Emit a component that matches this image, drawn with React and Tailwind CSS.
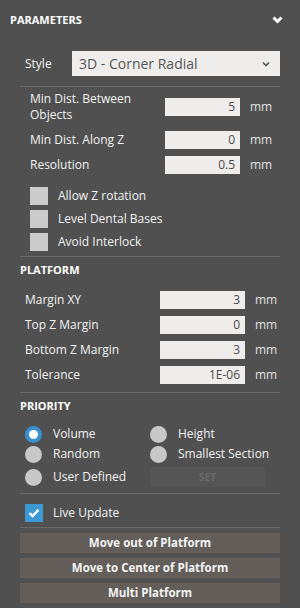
import React from 'react';

const Divider = ({ className = '' }) => (
  <div className={`mx-[20px] h-px bg-[#696969] ${className}`} />
);

function NumField({ label, value, labelPad = 'pl-[30px]', inputW = 'w-[75px]', h = 'h-[24px]', leading = '' }) {
  return (
    <div className={`flex items-center ${h} ${labelPad}`}>
      <div className={`w-[135px] text-[12px] text-[#f2f2f2] ${leading}`}>{label}</div>
      <div className={`${inputW} h-[18px] bg-[#eeedeb] text-right pr-[5px] text-[12px] leading-[18px] text-[#4a4a4a]`}>
        {value}
      </div>
      <div className="ml-[10px] text-[12px] text-[#e0e0e0]">mm</div>
    </div>
  );
}

function Check({ label, checked = false }) {
  return (
    <div className="flex items-center h-[18px] gap-[10px]">
      {checked ? (
        <div className="w-[18px] h-[18px] bg-[#3d99d4] flex items-center justify-center">
          <svg width="12" height="10" viewBox="0 0 12 10">
            <path d="M1.5 5.2 L4.6 8 L10.5 1.8" fill="none" stroke="#fff" strokeWidth="2.4" />
          </svg>
        </div>
      ) : (
        <div className="w-[18px] h-[18px] bg-[#cbcbcb]" />
      )}
      <span className="text-[12px] text-[#f2f2f2]">{label}</span>
    </div>
  );
}

function Radio({ label, selected = false }) {
  return (
    <div className="flex items-center gap-[11px] whitespace-nowrap">
      {selected ? (
        <div className="w-[17px] h-[17px] rounded-full bg-[#3a8fcf] flex items-center justify-center">
          <div className="w-[9px] h-[9px] rounded-full bg-white" />
        </div>
      ) : (
        <div className="w-[17px] h-[17px] rounded-full bg-[#c8c8c8]" />
      )}
      <span className="text-[12px] text-[#f2f2f2]">{label}</span>
    </div>
  );
}

export default function App() {
  return (
    <div className="w-[300px] h-[608px] bg-[#505050] font-['Open_Sans',sans-serif] overflow-hidden">
      {/* Header */}
      <div className="h-[40px] flex items-center justify-between pl-[10px] pr-[17px]">
        <span className="text-[11px] font-bold text-white">PARAMETERS</span>
        <svg width="11" height="8" viewBox="0 0 11 8">
          <path d="M1.5 1.5 L5.5 5.5 L9.5 1.5" fill="none" stroke="#fff" strokeWidth="3" />
        </svg>
      </div>

      {/* Style */}
      <div className="mt-[11px] flex items-center pl-[25px] pr-[20px]">
        <span className="w-[47px] text-[12px] text-[#f2f2f2]">Style</span>
        <div className="flex-1 h-[25px] bg-[#eeedeb] flex items-center justify-between pl-[7px] pr-[10px]">
          <span className="text-[14px] text-[#555555]">3D - Corner Radial</span>
          <svg width="8" height="6" viewBox="0 0 8 6">
            <path d="M1 1.5 L4 4.5 L7 1.5" fill="none" stroke="#555" strokeWidth="1.6" />
          </svg>
        </div>
      </div>

      <Divider className="mt-[10px]" />

      <div className="mt-[5px]">
        <NumField
          label={<>Min Dist. Between<br />Objects</>}
          value="5"
          h="h-[30px]"
          leading="leading-[16px]"
        />
        <div className="mt-[6px] flex flex-col gap-px">
          <NumField label="Min Dist. Along Z" value="0" />
          <NumField label="Resolution" value="0.5" />
        </div>
      </div>

      <div className="mt-[10px] pl-[30px] flex flex-col gap-[5px]">
        <Check label="Allow Z rotation" />
        <Check label="Level Dental Bases" />
        <Check label="Avoid Interlock" />
      </div>

      <Divider className="mt-[5px]" />

      {/* Platform */}
      <div className="mt-[4px] h-[18px] flex items-center pl-[20px] text-[11px] font-bold text-white">PLATFORM</div>
      <div className="mt-[9px] flex flex-col gap-px">
        <NumField label="Margin XY" value="3" labelPad="pl-[25px]" inputW="w-[85px]" />
        <NumField label="Top Z Margin" value="0" labelPad="pl-[25px]" inputW="w-[85px]" />
        <NumField label="Bottom Z Margin" value="3" labelPad="pl-[25px]" inputW="w-[85px]" />
        <NumField label="Tolerance" value="1E-06" labelPad="pl-[25px]" inputW="w-[85px]" />
      </div>

      <Divider className="mt-[5px]" />

      {/* Priority */}
      <div className="mt-[4px] h-[18px] flex items-center pl-[20px] text-[11px] font-bold text-white">PRIORITY</div>
      <div className="mt-[9px] pl-[25px] grid grid-cols-[125px_115px]">
        <div className="h-[20px] flex items-center"><Radio label="Volume" selected /></div>
        <div className="h-[20px] flex items-center"><Radio label="Height" /></div>
        <div className="h-[20px] flex items-center"><Radio label="Random" /></div>
        <div className="h-[20px] flex items-center"><Radio label="Smallest Section" /></div>
        <div className="mt-[3px] h-[20px] flex items-center"><Radio label="User Defined" /></div>
        <div className="mt-[3px] h-[20px] rounded-[2px] bg-[#555555] flex items-center justify-center text-[10px] font-bold text-[#6b6b6b]">
          SET
        </div>
      </div>

      <Divider className="mt-[6px]" />

      <div className="mt-[10px] pl-[25px]">
        <Check label="Live Update" checked />
      </div>

      <Divider className="mt-[5px]" />

      {/* Actions */}
      <div className="mt-[5px] mx-[20px] flex flex-col gap-[5px]">
        {['Move out of Platform', 'Move to Center of Platform', 'Multi Platform'].map((t) => (
          <button
            key={t}
            className="h-[20px] w-full bg-[#635e5a] text-[11.5px] font-bold text-[#f4f4f4] flex items-center justify-center"
          >
            {t}
          </button>
        ))}
      </div>
    </div>
  );
}
